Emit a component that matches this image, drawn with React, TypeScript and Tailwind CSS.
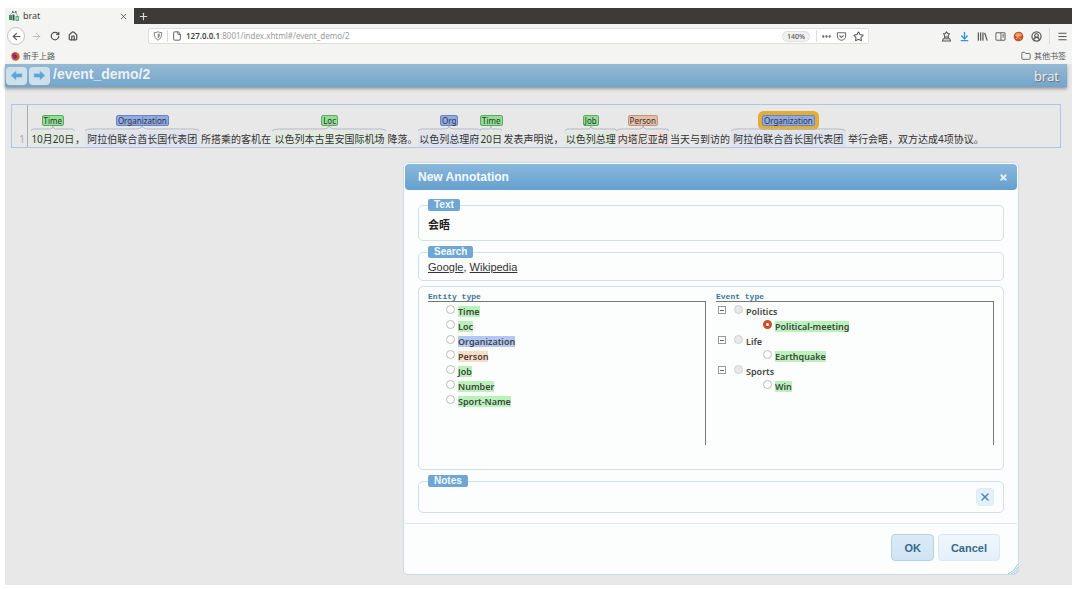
import { useState } from "react";
import clsx from "clsx";
import {
  ArrowDownToLine,
  ArrowLeft,
  ArrowRight,
  CircleUserRound,
  Ellipsis,
  File,
  Folder,
  House,
  Menu,
  Plus,
  RotateCw,
  Star,
  X,
} from "lucide-react";

type Tone = "green" | "blue" | "peach";

interface Segment {
  text: string;
  // width of the text in ems, digits count for a little over half
  size: number;
  label?: string;
  tone?: Tone;
  active?: boolean;
}

const segments: Segment[] = [
  { text: "10月20日", size: 4.2, label: "Time", tone: "green" },
  { text: "，", size: 1 },
  { text: "阿拉伯联合酋长国代表团", size: 11, label: "Organization", tone: "blue" },
  { text: "所搭乘的客机在", size: 7 },
  { text: "以色列本古里安国际机场", size: 11, label: "Loc", tone: "green" },
  { text: "降落。", size: 3 },
  { text: "以色列总理府", size: 6, label: "Org", tone: "blue" },
  { text: "20日", size: 2.1, label: "Time", tone: "green" },
  { text: "发表声明说，", size: 6 },
  { text: "以色列总理", size: 5, label: "Job", tone: "green" },
  { text: "内塔尼亚胡", size: 5, label: "Person", tone: "peach" },
  { text: "当天与到访的", size: 6 },
  { text: "阿拉伯联合酋长国代表团", size: 11, label: "Organization", tone: "blue", active: true },
  { text: "举行会晤，双方达成4项协议。", size: 13.5 },
];

const labelTone: Record<Tone, string> = {
  green: "border-[#5fa867] bg-[#8fe093]",
  blue: "border-[#6a84c0] bg-[#8fabe6]",
  peach: "border-[#c0957c] bg-[#e8bfa6]",
};

const spanTone: Record<Tone, string> = {
  green: "bg-[#e0eadf]",
  blue: "bg-[#dfe3ee]",
  peach: "bg-[#ebe2df]",
};

const typeTone: Record<Tone, string> = {
  green: "bg-[#b9f3b9]",
  blue: "bg-[#b4c8f6]",
  peach: "bg-[#fbdcc6]",
};

const entityTypes: { name: string; tone: Tone }[] = [
  { name: "Time", tone: "green" },
  { name: "Loc", tone: "green" },
  { name: "Organization", tone: "blue" },
  { name: "Person", tone: "peach" },
  { name: "Job", tone: "green" },
  { name: "Number", tone: "green" },
  { name: "Sport-Name", tone: "green" },
];

const eventTypes = [
  { name: "Politics", child: "Political-meeting" },
  { name: "Life", child: "Earthquake" },
  { name: "Sports", child: "Win" },
];

const cjk = "font-['Noto_Sans','Noto_Sans_CJK_SC',sans-serif]";

function BratIcon() {
  return (
    <svg viewBox="0 0 10 10" className="size-[10px]">
      <path d="M1.500 4 3 1.500h4L8.500 5" stroke="#7d9a92" strokeWidth="0.7" fill="none" />
      <rect x="3" y="0" width="1.500" height="2" fill="#557f6f" />
      <rect x="6" y="0" width="1.500" height="2" fill="#557f6f" />
      <rect x="0" y="4" width="3" height="5" fill="#3f9b52" />
      <rect x="3.500" y="3.500" width="2" height="6" fill="#33506b" />
      <rect x="6.500" y="5" width="3.500" height="5" fill="#5fae7c" />
      <rect x="7.500" y="6.500" width="1.500" height="2" fill="#dff0e4" />
    </svg>
  );
}

function FirefoxIcon() {
  return (
    <svg viewBox="0 0 10 10" className="size-[9px]">
      <circle cx="5" cy="5" r="4.6" fill="#e0562c" />
      <path d="M5 .4a4.6 4.6 0 0 0-4.4 4L3 5l2-2z" fill="#c22c4a" />
      <path d="M6 .6c3 1 4.500 5 1.500 8C9.800 7 10 3 6 .6z" fill="#f5b335" />
      <circle cx="4.600" cy="5.200" r="2.200" fill="#4a3b94" />
    </svg>
  );
}

function ShieldIcon() {
  return (
    <svg viewBox="0 0 12 12" className="size-[10px]" fill="none" stroke="#777" strokeWidth="1.100" strokeLinejoin="round">
      <path d="M6 1c1.500.6 3 .9 4.500 1C10.500 6.500 9 9.500 6 11 3 9.500 1.500 6.500 1.500 2 3 1.900 4.500 1.600 6 1z" />
      <path d="M6 3.500v5c1.300-1 2-2.500 2.200-4.500z" fill="#999" strokeWidth="0.600" />
    </svg>
  );
}

function PocketIcon() {
  return (
    <svg viewBox="0 0 12 12" className="size-[11px]" fill="none" stroke="#6b6b6b" strokeWidth="1.100" strokeLinecap="round">
      <path d="M1.500 2h9v3.500a4.500 4.500 0 0 1-9 0z" strokeLinejoin="round" />
      <path d="m4 5 2 2 2-2" />
    </svg>
  );
}

function SealIcon() {
  return (
    <svg viewBox="0 0 12 12" className="size-[11px]" fill="none" stroke="#555" strokeWidth="1.100" strokeLinejoin="round">
      <path d="m6 .8 1.200 1.800 2.200.4-1.500 1.700.3 2.300L6 6.200 3.800 7l.3-2.300L2.600 3l2.200-.4z" />
      <path d="M2.500 8.500 1.500 11h9l-1-2.500z" />
    </svg>
  );
}

function LibraryIcon() {
  return (
    <svg viewBox="0 0 12 12" className="size-[11px]" fill="none" stroke="#555" strokeWidth="1.300" strokeLinecap="round">
      <path d="M1.500 2v8M4 2v8M6.500 2v8M8.500 2.500l2.500 7.500" />
    </svg>
  );
}

function SidebarIcon() {
  return (
    <svg viewBox="0 0 12 12" className="size-[11px]" fill="none" stroke="#666" strokeWidth="1.100">
      <rect x="1" y="2" width="10" height="8" rx="1" />
      <path d="M6.500 2v8M8 4.500h2M8 6.500h2" />
    </svg>
  );
}

function ExtensionIcon() {
  return (
    <svg viewBox="0 0 12 12" className="size-[11px]">
      <circle cx="6" cy="6" r="5.300" fill="#c4552b" />
      <path d="M2 4.500C4 1.500 8 1.500 10 4.500L7.500 6 4 6.500z" fill="#f1a55f" />
      <path d="M3 8.500 6 7l2.500 2" stroke="#f0c9a0" strokeWidth="0.800" fill="none" />
    </svg>
  );
}

function ArrowGlyph({ flip = false }: { flip?: boolean }) {
  return (
    <svg viewBox="0 0 14 12" className={clsx("h-[11px] w-[13px]", flip && "-scale-x-100")}>
      <path d="M1 6l5.500-5v3H13v4H6.500v3z" fill="#5aa5d8" stroke="#8fc3e4" strokeWidth="0.600" />
    </svg>
  );
}

function BrowserChrome() {
  return (
    <div className={clsx("bg-[#f4f4f3] text-[8px] leading-3 text-[#555]", cjk)}>
      <div className="flex h-4 bg-[#3c3b37]">
        <div className="flex w-[129px] items-center gap-1 bg-[#f4f4f3] pr-1.5 pl-1">
          <BratIcon />
          <span className="flex-1 text-[9px] text-[#444]">brat</span>
          <button type="button" aria-label="Close tab">
            <X className="size-[9px]" strokeWidth={2.4} />
          </button>
        </div>
        <button type="button" aria-label="New tab" className="px-1 text-[#ddd]">
          <Plus className="size-[11px]" strokeWidth={2.4} />
        </button>
      </div>

      <div className="flex h-6 items-center pr-1">
        <div className="flex w-[143px] items-center gap-2 pl-0.5">
          <button type="button" aria-label="Back" className="grid size-[18px] place-items-center rounded-full border border-[#c4c4c4] bg-white text-[#555]">
            <ArrowLeft className="size-[11px]" strokeWidth={2.4} />
          </button>
          <button type="button" aria-label="Forward" className="-ml-0.5 text-[#b5b5b5]">
            <ArrowRight className="size-[11px]" />
          </button>
          <button type="button" aria-label="Reload" className="text-[#555]">
            <RotateCw className="size-[10px]" strokeWidth={3} />
          </button>
          <button type="button" aria-label="Home" className="text-[#555]">
            <House className="size-[10px]" strokeWidth={3} />
          </button>
        </div>
        <div className="flex h-4 w-[721px] items-center gap-1 rounded-xs border border-[#dedede] bg-white px-1">
          <ShieldIcon />
          <span className="h-3 w-px bg-[#ddd]" />
          <File className="size-[10px]" strokeWidth={2.2} />
          <span className="flex-1 text-[#9a9a9a]">
            <span className="font-semibold text-[#444]">127.0.0.1</span>:8001/index.xhtml#/event_demo/2
          </span>
          <span className="rounded-full border border-[#e0e0e0] bg-[#f0f0f0] px-1 text-[7px] leading-[9px] font-medium">140%</span>
          <span className="ml-0.5 h-3 w-px bg-[#ddd]" />
          <Ellipsis className="size-[11px]" strokeWidth={3} />
          <PocketIcon />
          <Star className="ml-0.5 size-[11px]" strokeWidth={2.2} />
        </div>
        <div className="ml-auto flex items-center gap-[7px]">
          <SealIcon />
          <ArrowDownToLine className="size-[11px] text-[#2f95e8]" strokeWidth={3} />
          <LibraryIcon />
          <SidebarIcon />
          <ExtensionIcon />
          <CircleUserRound className="size-[11px]" strokeWidth={2.6} />
          <span className="h-4 w-px bg-[#ddd]" />
          <Menu className="size-[11px]" strokeWidth={2.4} />
        </div>
      </div>

      <div className="flex h-4 items-center px-1.5">
        <a href="#start" className="flex items-center gap-[3px]">
          <FirefoxIcon />
          <span>新手上路</span>
        </a>
        <a href="#bookmarks" className="ml-auto flex items-center gap-[3px]">
          <Folder className="size-[10px]" />
          <span>其他书签</span>
        </a>
      </div>
    </div>
  );
}

function DocumentHeader() {
  return (
    <header className="mr-[5px] flex h-[23px] items-center bg-linear-to-b from-[#95b9d3] to-[#73a5cb] pr-2 shadow-[0_2px_3px_#999]">
      <button type="button" aria-label="Previous document" className="ml-px grid h-[18px] w-[21px] place-items-center rounded-sm bg-[#cfe0ed]">
        <ArrowGlyph />
      </button>
      <button type="button" aria-label="Next document" className="ml-0.5 grid h-[18px] w-[21px] place-items-center rounded-sm bg-[#cfe0ed]">
        <ArrowGlyph flip />
      </button>
      <h1 className="ml-[3px] -mt-1 text-[14px] leading-4 font-bold text-[#eaf1f7]">/event_demo/2</h1>
      <span className="ml-auto font-['Liberation_Sans_Narrow','Open_Sans',sans-serif] text-[13px] leading-4 text-[#f3f3f3] [text-shadow:1px_1px_1px_#666]">
        brat
      </span>
    </header>
  );
}

function Brace() {
  return (
    <svg viewBox="0 0 100 5" preserveAspectRatio="none" className="h-[5px] w-full" fill="none">
      <path d="M0 5Q1 3 6 3H44Q49 3 50 0Q51 3 56 3H94Q99 3 100 5" stroke="#b4b8c4" vectorEffect="non-scaling-stroke" />
    </svg>
  );
}

function AnnotatedText() {
  return (
    <section className="mr-[11px] ml-1.5 flex h-11 border border-[#b3c3e8]">
      <span className={clsx("flex w-4 items-end justify-end border-r border-[#aaa] pr-0.5 text-[10px] leading-4 text-[#aaa]", cjk)}>1</span>
      <p className={clsx("mr-[74px] ml-[3px] flex min-w-0 flex-1 items-end", cjk)}>
        {segments.map((s, i) => (
          <span key={i} className="flex min-w-0 basis-0 flex-col items-center whitespace-nowrap" style={{ flexGrow: s.size }}>
            {s.label && s.tone && (
              <>
                <span
                  className={clsx(
                    "rounded-xs border px-px text-[8px] leading-[9px] text-[#333]",
                    labelTone[s.tone],
                    s.active && "ring-4 ring-[#e3ac35]",
                  )}
                >
                  {s.label}
                </span>
                <Brace />
              </>
            )}
            <span className={clsx("flex w-full justify-center text-[10px] leading-4 text-[#333]", s.tone && spanTone[s.tone])}>{s.text}</span>
          </span>
        ))}
      </p>
    </section>
  );
}

const fieldsetClass = "min-w-0 rounded-[5px] border border-[#cfe0ea] px-[9px]";
const legendClass = "rounded-xs bg-[#6fa6d2] px-1.5 text-[10px] leading-3 font-bold text-[#f2f8fc]";
const radioClass =
  "size-[9px] shrink-0 appearance-none rounded-full border border-[#bbb] bg-white checked:border-[3px] checked:border-[#cc4f2c] disabled:border-[#d0d0d0] disabled:bg-[#e9e9e9]";

interface TypeRadioProps {
  name: string;
  tone?: Tone;
  selected: string;
  disabled?: boolean;
  onSelect: (name: string) => void;
}

function TypeRadio({ name, tone, selected, disabled, onSelect }: TypeRadioProps) {
  return (
    <label className="flex h-[15px] items-start gap-[3px]">
      <input type="radio" name="type" className={radioClass} checked={selected === name} disabled={disabled} onChange={() => onSelect(name)} />
      <span className={clsx("mt-px leading-[11px]", tone && typeTone[tone])}>{name}</span>
    </label>
  );
}

function AnnotationDialog() {
  const [selected, setSelected] = useState("Political-meeting");

  const headingClass = "font-['Liberation_Mono',monospace] text-[8px] leading-[9px] font-bold text-[#3b7795]";
  const scrollerClass = "h-[144px] border-t border-r border-[#777] pt-[3px] font-['Noto_Sans',sans-serif] text-[9px] font-semibold text-[#444]";

  return (
    <div
      role="dialog"
      aria-labelledby="dialog-title"
      className="absolute top-[154px] right-[53px] left-[398px] rounded-[5px] border border-[#c9dde9] bg-[#fcfdfd] p-px"
    >
      <div className="flex h-[26px] items-center justify-between rounded-[4px] bg-linear-to-b from-[#8ab8dc] to-[#64a0cf] px-[13px]">
        <h2 id="dialog-title" className="text-[12px] leading-4 font-bold text-[#f4f9fd]">
          New Annotation
        </h2>
        <button type="button" aria-label="Close" className="-mr-1 text-[#e4f0f8]">
          <X className="size-[9px]" strokeWidth={5} />
        </button>
      </div>

      <form className="flex flex-col gap-[5px] px-[13px] pt-[9px] pb-[10px]">
        <fieldset className={clsx(fieldsetClass, "h-[42px] pt-[3px]")}>
          <legend className={legendClass}>Text</legend>
          <p className="font-['Noto_Sans_CJK_SC',sans-serif] text-[11px] leading-5 font-bold text-[#222]">会晤</p>
        </fieldset>

        <fieldset className={clsx(fieldsetClass, "h-[35px]")}>
          <legend className={legendClass}>Search</legend>
          <p className="pt-px text-[11px] leading-4 text-[#333]">
            <a href="#google" className="underline">
              Google
            </a>
            ,{" "}
            <a href="#wikipedia" className="underline">
              Wikipedia
            </a>
          </p>
        </fieldset>

        <div className={clsx(fieldsetClass, "grid h-[184px] grid-cols-2 gap-2.5 pt-[5px]")}>
          <div>
            <h3 className={headingClass}>Entity type</h3>
            <div className={clsx(scrollerClass, "pl-[18px]")}>
              {entityTypes.map((t) => (
                <TypeRadio key={t.name} name={t.name} tone={t.tone} selected={selected} onSelect={setSelected} />
              ))}
            </div>
          </div>
          <div>
            <h3 className={headingClass}>Event type</h3>
            <div className={clsx(scrollerClass, "pl-0.5")}>
              {eventTypes.map((t) => (
                <div key={t.name}>
                  <div className="flex gap-2">
                    <button type="button" aria-label={`Collapse ${t.name}`} className="mt-px grid size-2 place-items-center border border-[#999] bg-white">
                      <span className="h-px w-1 bg-[#666]" />
                    </button>
                    <TypeRadio name={t.name} selected={selected} disabled onSelect={setSelected} />
                  </div>
                  <div className="pl-[45px]">
                    <TypeRadio name={t.child} tone="green" selected={selected} onSelect={setSelected} />
                  </div>
                </div>
              ))}
            </div>
          </div>
        </div>

        <fieldset className={clsx(fieldsetClass, "h-[38px]")}>
          <legend className={legendClass}>
            <label htmlFor="notes">Notes</label>
          </legend>
          <div className="flex items-center gap-2 pt-px">
            <input id="notes" type="text" className="h-4 min-w-0 flex-1 bg-transparent text-[11px] outline-none" />
            <button type="button" aria-label="Clear notes" className="grid size-[18px] place-items-center rounded-sm border border-[#dcebf5] bg-[#e3f0f9] text-[#4f88ac]">
              <X className="size-3" strokeWidth={3} />
            </button>
          </div>
        </fieldset>
      </form>

      <div className="flex justify-end gap-1 border-t border-[#d6e9ef] px-[17px] pt-[10px] pb-3 text-[11px] leading-4 font-bold text-[#38698c]">
        <button type="button" className="h-[27px] rounded-sm border border-[#b5d2e3] bg-linear-to-b from-[#dbebf5] to-[#cfe4f3] px-3">
          OK
        </button>
        <button type="button" className="h-[27px] rounded-sm border border-[#dbe9f2] bg-linear-to-b from-[#f0f7fc] to-[#e3f0fa] px-3">
          Cancel
        </button>
      </div>

      <svg viewBox="0 0 10 10" className="absolute right-0 bottom-0 size-[10px]" fill="none" stroke="#9cc4dc">
        <path d="M0 10Q7 7 10 0M3 10Q8 8 10 3M6 10Q9 9 10 6" />
      </svg>
    </div>
  );
}

export default function App() {
  return (
    <div className="flex min-h-screen flex-col bg-white pt-2 pr-2 pb-1 pl-[5px] font-['Liberation_Sans',Arial,sans-serif]">
      <div className="relative flex-1 bg-[#e8e8e8]">
        <BrowserChrome />
        <DocumentHeader />
        <main className="pt-[17px]">
          <AnnotatedText />
        </main>
        <AnnotationDialog />
      </div>
    </div>
  );
}
